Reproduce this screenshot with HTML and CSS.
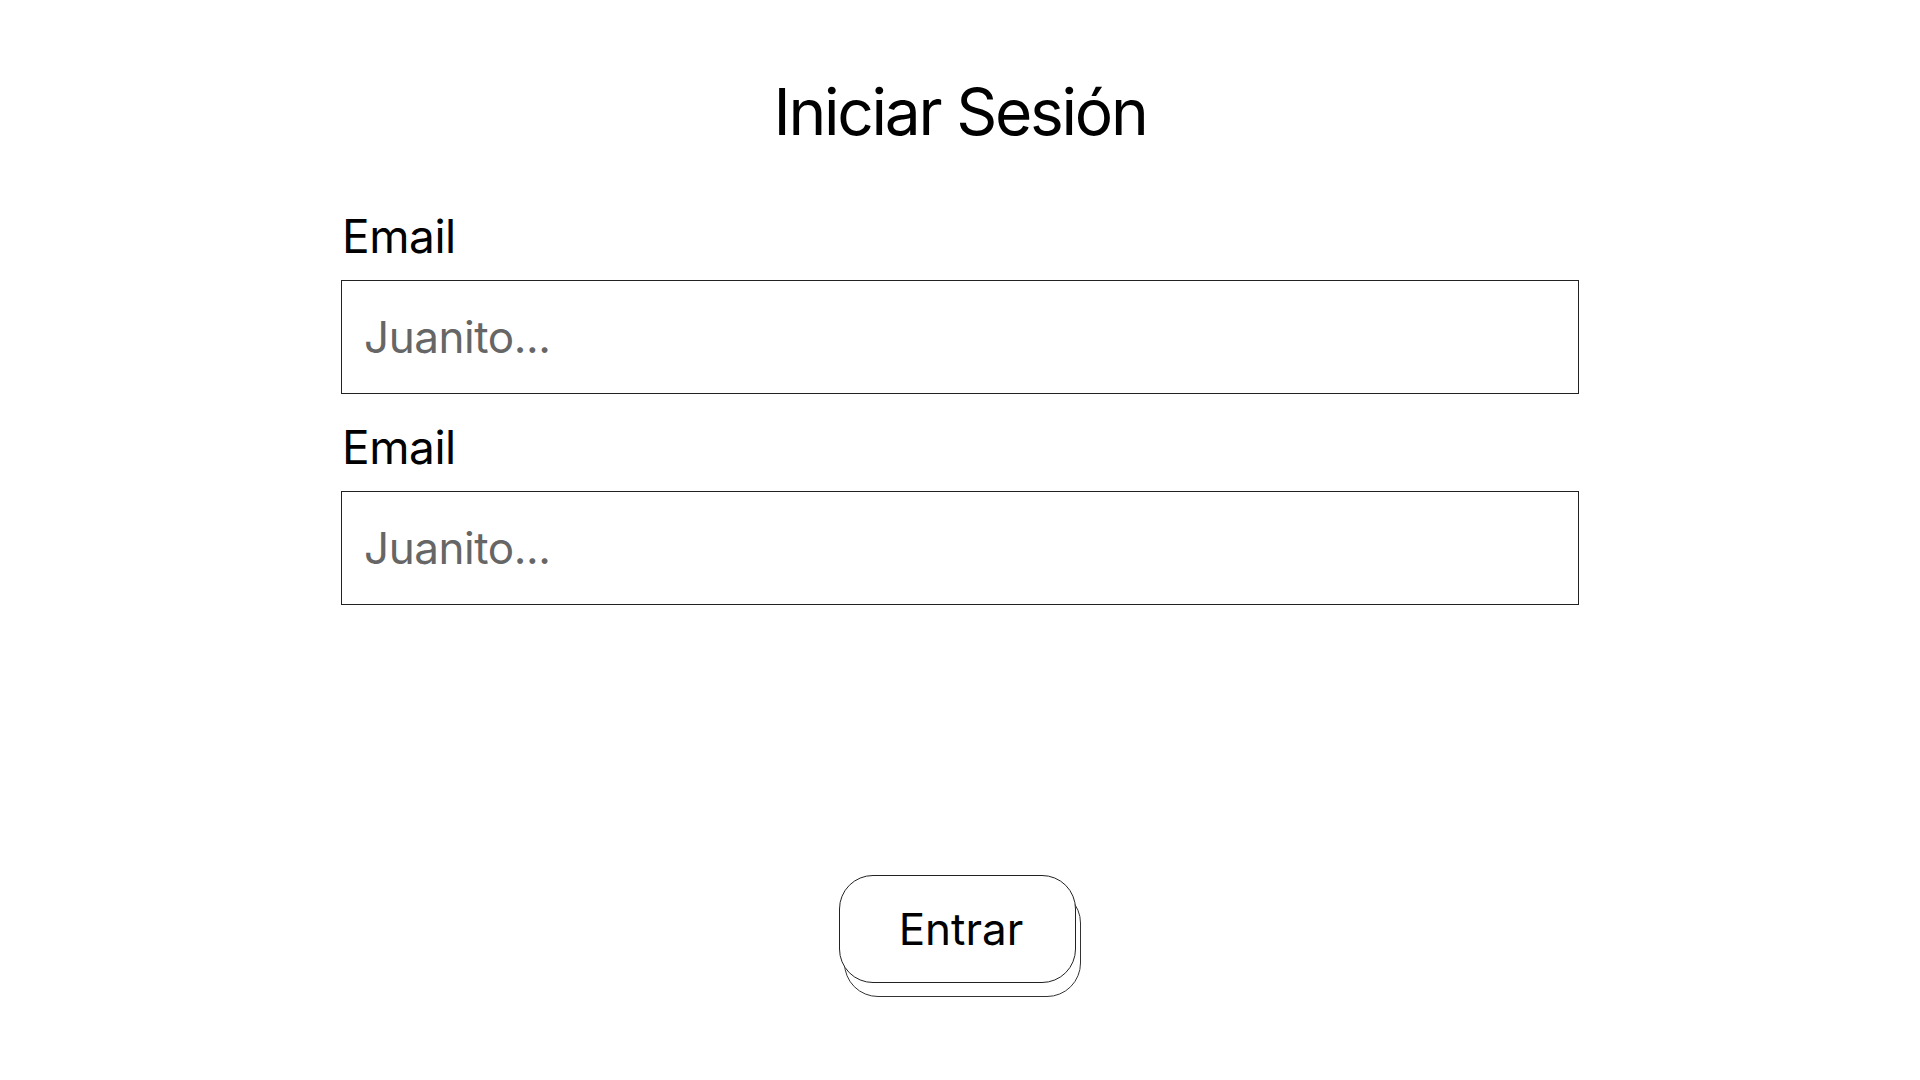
FILE: index.html
```html
<!DOCTYPE html>
<html lang="es">
<head>
<meta charset="utf-8">
<title>Iniciar Sesión</title>
<link rel="stylesheet" href="styles.css">
</head>
<body>
<main class="page">
  <h1 class="title">Iniciar Sesión</h1>
  <form class="form">
    <div class="field">
      <label class="label" for="email1">Email</label>
      <input class="input" id="email1" type="text" placeholder="Juanito...">
    </div>
    <div class="field">
      <label class="label" for="email2">Email</label>
      <input class="input" id="email2" type="text" placeholder="Juanito...">
    </div>
  </form>
  <div class="actions">
    <span class="button-back" aria-hidden="true"></span>
    <button class="button" type="button">Entrar</button>
  </div>
</main>
</body>
</html>
```

FILE: styles.css
```css
html, body {
  margin: 0;
  padding: 0;
  background: #fff;
}

body {
  font-family: Inter, "Noto Sans", sans-serif;
  color: #000;
}

.page {
  display: flex;
  flex-direction: column;
  align-items: center;
  min-height: 1080px;
  box-sizing: border-box;
}

.title {
  margin: 73px 0 0;
  font-size: 64px;
  font-weight: 400;
  line-height: normal;
  letter-spacing: -0.035em;
}

.form {
  width: 1238px;
  margin-top: 58px;
  display: flex;
  flex-direction: column;
  gap: 25px;
}

.field {
  display: flex;
  flex-direction: column;
  gap: 16px;
}

.label {
  font-size: 46px;
  line-height: normal;
  letter-spacing: -0.01em;
  padding-left: 1px;
}

.input {
  box-sizing: border-box;
  height: 114px;
  width: 100%;
  margin: 0;
  border: 1px solid #222;
  border-radius: 0;
  padding: 0 22px;
  font-family: Inter, "Noto Sans", sans-serif;
  font-size: 44px;
  letter-spacing: -0.01em;
  color: #000;
  background: #fff;
  outline: none;
}

.input::placeholder {
  color: #666;
}

.actions {
  margin-top: 270px;
  display: grid;
}

.button-back,
.button {
  grid-area: 1 / 1;
  box-sizing: border-box;
  width: 237px;
  height: 108px;
  border: 1px solid #222;
  border-radius: 34px;
  background: #fff;
}

.button-back {
  display: block;
  margin: 14px 0 0 5px;
  border-color: #333;
}

.button {
  margin: 0 5px 14px 0;
  font-family: Inter, "Noto Sans", sans-serif;
  font-size: 44px;
  color: #000;
  padding: 0 0 0 7px;
  cursor: pointer;
}
```
